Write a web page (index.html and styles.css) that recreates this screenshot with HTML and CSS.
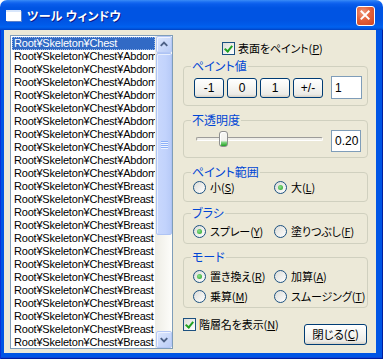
FILE: index.html
```html
<!DOCTYPE html>
<html lang="ja">
<head>
<meta charset="utf-8">
<title>ツール ウィンドウ</title>
<link rel="stylesheet" href="styles.css">
</head>
<body>
<div class="window">
  <div class="titlebar">
    <svg class="app-icon" width="16" height="12" viewBox="0 0 16 12">
      <rect x="1" y="1" width="15" height="11" fill="#5a7fc8"/>
      <rect x="0" y="0" width="15" height="11" fill="#ffffff"/>
      <rect x="0" y="0" width="15" height="2" fill="#d8e6fb"/>
    </svg>
    <span class="title">ツール ウィンドウ</span>
    <div class="close">
      <svg width="19" height="19" viewBox="0 0 19 19"><path d="M5 5 L13 13 M13 5 L5 13" stroke="#fff" stroke-width="2.2" stroke-linecap="square"/></svg>
    </div>
  </div>
  <div class="frame">
    <div class="client">
      <div class="listbox">
        <ul class="items">
          <li class="sel"><span>Root¥Skeleton¥Chest</span></li>
          <li>Root¥Skeleton¥Chest¥Abdom</li>
          <li>Root¥Skeleton¥Chest¥Abdom</li>
          <li>Root¥Skeleton¥Chest¥Abdom</li>
          <li>Root¥Skeleton¥Chest¥Abdom</li>
          <li>Root¥Skeleton¥Chest¥Abdom</li>
          <li>Root¥Skeleton¥Chest¥Abdom</li>
          <li>Root¥Skeleton¥Chest¥Abdom</li>
          <li>Root¥Skeleton¥Chest¥Abdom</li>
          <li>Root¥Skeleton¥Chest¥Abdom</li>
          <li>Root¥Skeleton¥Chest¥Abdom</li>
          <li>Root¥Skeleton¥Chest¥Breast</li>
          <li>Root¥Skeleton¥Chest¥Breast</li>
          <li>Root¥Skeleton¥Chest¥Breast</li>
          <li>Root¥Skeleton¥Chest¥Breast</li>
          <li>Root¥Skeleton¥Chest¥Breast</li>
          <li>Root¥Skeleton¥Chest¥Breast</li>
          <li>Root¥Skeleton¥Chest¥Breast</li>
          <li>Root¥Skeleton¥Chest¥Breast</li>
          <li>Root¥Skeleton¥Chest¥Breast</li>
          <li>Root¥Skeleton¥Chest¥Breast</li>
          <li>Root¥Skeleton¥Chest¥Breast</li>
          <li>Root¥Skeleton¥Chest¥Breast</li>
          <li>Root¥Skeleton¥Chest¥Breast</li>
        </ul>
        <div class="scrollbar">
          <div class="sb-btn">
            <svg width="15" height="15" viewBox="0 0 15 15"><path d="M4 9 L7.5 5.5 L11 9" fill="none" stroke="#4d6185" stroke-width="2"/></svg>
          </div>
          <div class="sb-track">
            <div class="sb-thumb">
              <div class="grip"><i></i><i></i><i></i><i></i></div>
            </div>
          </div>
          <div class="sb-btn">
            <svg width="15" height="15" viewBox="0 0 15 15"><path d="M4 6 L7.5 9.5 L11 6" fill="none" stroke="#4d6185" stroke-width="2"/></svg>
          </div>
        </div>
      </div>

      <div class="panel">
        <label class="check check-top"><span class="cb checked"></span><span class="jp">表面をペイント(<u>P</u>)</span></label>

        <div class="group g1">
          <div class="gtitle">ペイント値</div>
          <div class="btnrow">
            <div class="btn small">-1</div>
            <div class="btn small">0</div>
            <div class="btn small">1</div>
            <div class="btn small">+/-</div>
            <div class="field f1">1</div>
          </div>
        </div>

        <div class="group g2">
          <div class="gtitle">不透明度</div>
          <div class="sliderrow">
            <div class="slider">
              <div class="track"></div>
              <div class="thumb"></div>
            </div>
            <div class="field f2">0.20</div>
          </div>
        </div>

        <div class="group g3">
          <div class="gtitle">ペイント範囲</div>
          <div class="radiorow r3">
            <label class="radio"><span class="rb"></span><span class="jp">小(<u>S</u>)</span></label>
            <label class="radio"><span class="rb on"></span><span class="jp">大(<u>L</u>)</span></label>
          </div>
        </div>

        <div class="group g4">
          <div class="gtitle">ブラシ</div>
          <div class="radiorow r4">
            <label class="radio"><span class="rb on"></span><span class="jp">スプレー(<u>Y</u>)</span></label>
            <label class="radio"><span class="rb"></span><span class="jp">塗りつぶし(<u>F</u>)</span></label>
          </div>
        </div>

        <div class="group g5">
          <div class="gtitle">モード</div>
          <div class="radiorow r5a">
            <label class="radio"><span class="rb on"></span><span class="jp">置き換え(<u>R</u>)</span></label>
            <label class="radio"><span class="rb"></span><span class="jp">加算(<u>A</u>)</span></label>
          </div>
          <div class="radiorow r5b">
            <label class="radio"><span class="rb"></span><span class="jp">乗算(<u>M</u>)</span></label>
            <label class="radio"><span class="rb"></span><span class="jp">スムージング(<u>T</u>)</span></label>
          </div>
        </div>

        <div class="bottomrow">
          <label class="check"><span class="cb checked"></span><span class="jp">階層名を表示(<u>N</u>)</span></label>
          <div class="btn closebtn"><span class="jp btntext">閉じる(<u>C</u>)</span></div>
        </div>
      </div>
    </div>
  </div>
</div>
</body>
</html>
```
FILE: styles.css
```css
* { box-sizing: border-box; }
html, body { margin: 0; padding: 0; background: #ffffff; }
body {
  width: 383px; height: 359px; overflow: hidden;
  font-family: "Noto Sans CJK JP", "Noto Sans", sans-serif;
  font-size: 12px; color: #000;
}
.window { width: 383px; height: 359px; display: flex; flex-direction: column; }

/* title bar */
.titlebar {
  height: 30px; flex: none;
  border-radius: 7px 7px 0 0;
  background: linear-gradient(#3b8cf7 0, #1a6ef2 2px, #0a5deb 4px, #0054e3 8px, #0054e3 20px, #005bea 25px, #0062f0 27px, #0050d8 29px, #0040c0 30px);
  display: flex; align-items: center;
  padding-left: 6px;
}
.app-icon { flex: none; margin-top: 2px; }
.title {
  margin-left: 5px; margin-top: 1px;
  color: #fff; font-weight: bold; font-size: 12px;
  font-feature-settings: "palt"; line-height: 16px; letter-spacing: 0.3px;
  text-shadow: 1px 1px 0 #0a1a8a;
}
.close {
  margin-left: auto; margin-right: 8px; margin-top: 1px;
  width: 19px; height: 20px; flex: none;
  border: 1px solid #fff; border-radius: 3px;
  background: radial-gradient(circle at 35% 30%, #f09a7c 0, #e2613b 45%, #cf4420 100%);
  display: flex; align-items: center; justify-content: center;
}
.close svg { display: block; }

/* frame + client */
.frame {
  flex: 1; display: flex;
  padding: 0 7px 6px 4px;
  background: #0055e5;
  box-shadow: inset 1px 0 0 #0831d9, inset -1px 0 0 #001ea0, inset 0 -1px 0 #001ea0, inset 0 -2px 0 #0a46d8;
}
.client {
  flex: 1; background: #ece9d8;
  display: flex; align-items: flex-start;
  padding: 5px 0 0 6px;
}

/* listbox */
.listbox {
  flex: none; width: 163px; height: 314px;
  border: 1px solid #7f9db9; background: #fff;
  display: flex;
}
.items {
  list-style: none; margin: 0; padding: 1px 0 0 1px;
  flex: 1; min-width: 0; overflow: hidden;
  font-family: "Liberation Sans", sans-serif; font-size: 11px; letter-spacing: -0.2px;
}
.items li {
  height: 13px; line-height: 13px; padding-left: 2px;
  white-space: nowrap; overflow: hidden;
}
.items li.sel { background: #316ac5; color: #fff; outline: 1px dotted #9ab8e8; outline-offset: -1px; }

.scrollbar {
  flex: none; width: 17px; display: flex; flex-direction: column;
  background: linear-gradient(to right, #eeede5, #fdfdfa);
}
.sb-btn {
  flex: none; height: 17px; margin: 0 0 0 1px;
  border: 1px solid #b5c8f6; border-radius: 2px;
  background: linear-gradient(135deg, #dde7fd, #bacdf7);
  box-shadow: inset 1px 1px 0 #f0f4fe;
  display: flex; align-items: center; justify-content: center;
}
.sb-track { flex: 1; display: flex; flex-direction: column; }
.sb-thumb {
  height: 182px; margin: 0 0 0 1px;
  border: 1px solid #aec4f4; border-radius: 2px;
  background: linear-gradient(to right, #c9d8fc, #c2d3fc 60%, #b8cbf8);
  box-shadow: inset 1px 1px 0 #e6eefe;
  display: flex; align-items: center; justify-content: center;
}
.grip { display: flex; flex-direction: column; gap: 1px; }
.grip i { display: block; width: 7px; height: 1px; background: #8cb0f8; box-shadow: 0 1px 0 #eef3fe; }

/* right panel */
.panel { flex: none; width: 185px; margin-left: 10px; display: flex; flex-direction: column; }
.jp { font-feature-settings: "palt"; line-height: 13px; white-space: nowrap; font-size: 11px; letter-spacing: -0.1px; }
u { text-decoration: underline; text-underline-offset: 1px; }

.check { display: flex; align-items: center; gap: 3px; height: 13px; }
.check-top { margin-top: 7px; padding-left: 39px; }
.cb {
  flex: none; width: 13px; height: 13px;
  border: 1px solid #1c5180;
  background: linear-gradient(135deg, #dcdcd7, #ffffff);
  position: relative;
}
.cb.checked::after {
  content: ""; position: absolute; left: 3px; top: 1px;
  width: 3px; height: 6px;
  border: solid #21a121; border-width: 0 2px 2px 0;
  transform: rotate(40deg);
}

.group {
  border: 1px solid #d0d0bf; border-radius: 4px;
  display: flex; flex-direction: column;
}
.gtitle {
  margin: -7px 0 0 7px; padding: 0 1px;
  width: fit-content; background: #ece9d8;
  color: #0046d5; line-height: 12px; height: 12px;
  font-feature-settings: "palt";
}
.g1 { margin-top: 11px; padding-bottom: 6px; }
.g2 { margin-top: 14px; padding-bottom: 5px; }
.g3 { margin-top: 14px; padding-bottom: 7px; }
.g4 { margin-top: 11px; padding-bottom: 5px; }
.g5 { margin-top: 13px; padding-bottom: 4px; }

.btnrow { display: flex; align-items: center; gap: 3px; margin-top: 4px; padding-left: 10px; height: 23px; }
.btn {
  border: 1px solid #003c74; border-radius: 3px;
  background: linear-gradient(#ffffff 0, #f7f7f4 40%, #ecebe6 85%, #d6d0c5 100%);
  display: flex; align-items: center; justify-content: center;
  font-family: "Liberation Sans", sans-serif; font-size: 12px;
}
.btn.small { width: 30px; height: 20px; }
.field {
  border: 1px solid #7f9db9; background: #fff;
  font-family: "Liberation Sans", sans-serif; font-size: 12px;
  padding-left: 3px; display: flex; align-items: center;
}
.f1 { width: 31px; height: 23px; margin-left: 5px; }

.sliderrow { display: flex; align-items: center; margin-top: 4px; padding-left: 12px; height: 22px; }
.slider { width: 127px; height: 22px; position: relative; }
.track {
  position: absolute; left: 0; right: 0; top: 7px; height: 4px;
  border: 1px solid; border-color: #9d9c99 #fff #fff #9d9c99; border-radius: 2px;
  background: #f0efe9;
}
.thumb {
  position: absolute; left: 23px; top: 1px; width: 9px; height: 16px;
  border: 1px solid #8e8f8f; border-radius: 3px;
  background: linear-gradient(#f6f6f3 0, #f3f3ef 60%, #7ed27e 75%, #21a121 100%);
  box-shadow: inset 1px 1px 0 #ffffff;
}
.f2 { width: 30px; height: 22px; margin-left: 8px; }

.radiorow { display: flex; padding-left: 9px; height: 13px; }
.r3 { margin-top: 3px; }
.r4 { margin-top: 6px; }
.r5a { margin-top: 7px; }
.r5b { margin-top: 7px; }
.radio { display: flex; align-items: center; gap: 4px; }
.radio:first-child { width: 81px; flex: none; }
.rb {
  flex: none; width: 13px; height: 13px; border-radius: 50%;
  border: 1px solid #1c5180;
  background: linear-gradient(135deg, #dcdcd7, #ffffff);
  display: flex; align-items: center; justify-content: center;
}
.rb.on::after {
  content: ""; width: 5px; height: 5px; border-radius: 50%;
  background: radial-gradient(circle at 40% 40%, #8de08d, #21a121);
}

.bottomrow { display: flex; align-items: flex-start; justify-content: space-between; margin-top: 10px; }
.closebtn { width: 63px; height: 21px; margin-top: 6px; margin-right: 1px; font-family: "Noto Sans CJK JP", sans-serif; }
.btntext { font-size: 11.5px; }
```
